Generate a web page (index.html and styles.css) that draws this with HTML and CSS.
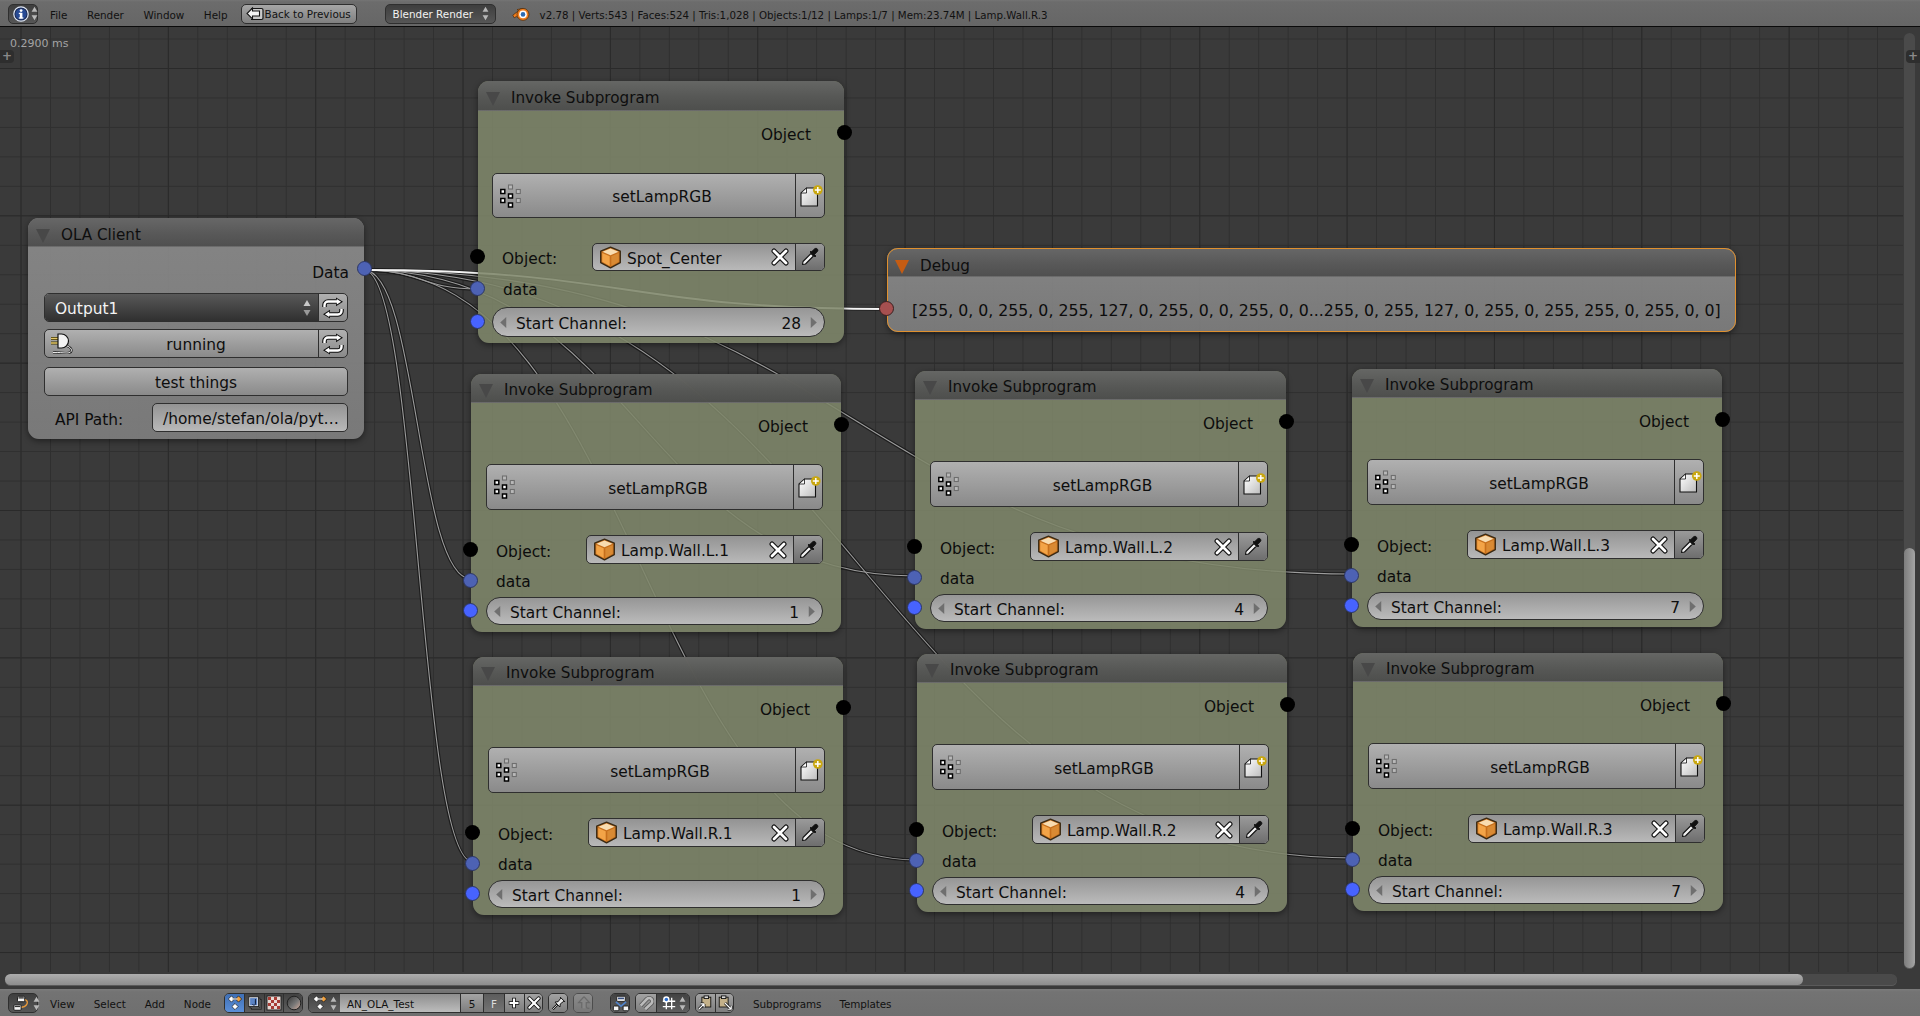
FILE: index.html
```html
<!DOCTYPE html>
<html lang="en">
<head>
<meta charset="utf-8">
<title>Blender Node Editor</title>
<link rel="stylesheet" href="styles.css">
</head>
<body>
<svg class="sprite" xmlns="http://www.w3.org/2000/svg">
  <defs>
    <linearGradient id="gPage" x1="0" y1="0" x2="1" y2="1"><stop offset="0" stop-color="#fff"/><stop offset="1" stop-color="#bdbdbd"/></linearGradient>
    <linearGradient id="gSphere" x1="0" y1="0" x2="1" y2="1"><stop offset="0" stop-color="#333"/><stop offset=".55" stop-color="#777"/><stop offset="1" stop-color="#d8b0a0"/></linearGradient>
    <symbol id="i-ud" viewBox="0 0 8 18"><path d="M4 1 7.500 7H.5zM4 17 .5 11h7z" fill="#b8b8b8"/></symbol>
    <symbol id="i-ud-dark" viewBox="0 0 8 18"><path d="M4 1 7.500 7H.5z" fill="#c8c8c8"/><path d="M4 17 .5 11h7z" fill="#9a9a9a"/></symbol>
    <symbol id="i-left" viewBox="0 0 6 10"><path d="M5.500 0v10L0 5z" fill="#6f6f6f"/></symbol>
    <symbol id="i-right" viewBox="0 0 6 10"><path d="M.5 0v10L6 5z" fill="#6f6f6f"/></symbol>
    <symbol id="i-info" viewBox="0 0 16 16"><circle cx="8" cy="8" r="7.200" fill="#1d2b52" stroke="#dfe7f5" stroke-width="1.200"/><circle cx="8" cy="8" r="5.600" fill="#274a94"/><rect x="6.800" y="6.800" width="2.600" height="5.600" fill="#fff"/><rect x="5.800" y="6.800" width="2" height="1.200" fill="#fff"/><rect x="5.800" y="11.400" width="4.600" height="1.200" fill="#fff"/><circle cx="8.100" cy="4.600" r="1.400" fill="#fff"/></symbol>
    <symbol id="i-back" viewBox="0 0 18 16"><path d="M5 2.500h10.500a1.500 1.500 0 0 1 1.500 1.500v8a1.500 1.500 0 0 1-1.500 1.500H5" fill="#c9c9c9" stroke="#151515" stroke-width="1.200"/><path d="M6.500 2 1 7.500 6.500 13V10h7V5h-7z" fill="#f5f5f5" stroke="#151515" stroke-width="1.100"/></symbol>
    <symbol id="i-blender" viewBox="0 0 18 16"><path d="M.8 9.200 6.500 4.800 5 3.600 11 2.400 9 13 4.300 10.600 2.200 11.800z" fill="#ee7d1e" stroke="#4b2a0a" stroke-width=".7" stroke-linejoin="round"/><circle cx="11" cy="8.400" r="6" fill="#ee7d1e" stroke="#4b2a0a" stroke-width=".7"/><circle cx="11" cy="8.400" r="3.800" fill="#fff"/><circle cx="11" cy="8.400" r="2.300" fill="#2c6bb3"/></symbol>
    <symbol id="i-nodeed" viewBox="0 0 20 18"><path d="M12 4.500c6 0 6 9-6 9" fill="none" stroke="#e99a3b" stroke-width="1.500"/><rect x="5" y="1" width="8" height="6" rx="1" fill="#f4f4f4" stroke="#111"/><rect x="1" y="10.500" width="8" height="6" rx="1" fill="#f4f4f4" stroke="#111"/><rect x="6" y="2" width="6" height="1.500" fill="#333"/><rect x="2" y="11.500" width="6" height="1.500" fill="#333"/></symbol>
    <symbol id="i-tree" viewBox="0 0 18 18"><path d="M5 1 8.500 4.500 5 8 1.500 4.500z" fill="#fff" stroke="#1b1b1b" stroke-width=".8"/><path d="M13 1 16.500 4.500 13 8 9.500 4.500z" fill="#f4a23d" stroke="#1b1b1b" stroke-width=".8"/><path d="M9 9.500 12.500 13 9 16.500 5.500 13z" fill="#fff" stroke="#1b1b1b" stroke-width=".8"/><path d="M6 4.500h6" stroke="#bbb" stroke-width="1.500"/></symbol>
    <symbol id="i-tex" viewBox="0 0 18 18"><rect x="5" y="5" width="11" height="11" fill="#777" stroke="#222"/><rect x="3.500" y="3.500" width="11" height="11" fill="#999" stroke="#222"/><rect x="2" y="2" width="11" height="11" fill="#dfe2e8" stroke="#222"/><rect x="3.500" y="3.500" width="8" height="8" fill="#5b83c4"/><path d="M9.500 4.500v5.200M6 10.500a1.500 1 0 1 0 3.500-1V6.500" fill="none" stroke="#16233f" stroke-width="1.100"/></symbol>
    <symbol id="i-check" viewBox="0 0 16 16"><rect x="1" y="1" width="14" height="14" fill="#e8d9d4" stroke="#222"/><path d="M2 2h3v3H2zM8 2h3v3H8zM5 5h3v3H5zM11 5h3v3h-3zM2 8h3v3H2zM8 8h3v3H8zM5 11h3v3H5zM11 11h3v3h-3z" fill="#a83c34"/></symbol>
    <symbol id="i-sphere" viewBox="0 0 16 16"><circle cx="8" cy="8" r="6.800" fill="url(#gSphere)" stroke="#222"/></symbol>
    <symbol id="i-plus" viewBox="0 0 16 16"><path d="M8 2v12M2 8h12" stroke="#111" stroke-width="4.200"/><path d="M8 2.800v10.400M2.800 8h10.400" stroke="#fff" stroke-width="2.400"/></symbol>
    <symbol id="i-x" viewBox="0 0 18 18"><path d="M3 3 15 15M15 3 3 15" stroke="#111" stroke-width="5" stroke-linecap="round"/><path d="M3 3 15 15M15 3 3 15" stroke="#fff" stroke-width="2.800" stroke-linecap="round"/></symbol>
    <symbol id="i-pin" viewBox="0 0 18 18"><path d="M2 16 7.500 10.500" stroke="#111" stroke-width="2.500"/><path d="M2 16 7.500 10.500" stroke="#ddd" stroke-width="1"/><path d="M4.500 8 8 7.500 11 3.500l-.5-1 5 5-1 -.5-4 3-.5 3.500z" fill="#e8e8e8" stroke="#111" stroke-width="1.100" stroke-linejoin="round"/></symbol>
    <symbol id="i-up" viewBox="0 0 18 18"><path d="M9 2 15 8.500H11.500V13a2 2 0 0 0 2 2H15M9 2 3 8.500H6.500V15" fill="none" stroke="#666" stroke-width="1.500"/><path d="M9 3.500 13 8H10.500v7h-3V8H5z" fill="#9a9a9a"/></symbol>
    <symbol id="i-usr" viewBox="0 0 20 20"><rect x="5" y="1.500" width="10" height="6" rx="1" fill="#f4f4f4" stroke="#111"/><rect x="6.500" y="3" width="7" height="2" fill="#39507f"/><path d="M4 8 10 13 16 8" fill="none" stroke="#4f82c9" stroke-width="2"/><rect x="1" y="13" width="6.500" height="5.500" rx="1" fill="#f4f4f4" stroke="#111"/><rect x="12.500" y="13" width="6.500" height="5.500" rx="1" fill="#f4f4f4" stroke="#111"/></symbol>
    <symbol id="i-mag" viewBox="0 0 18 18"><path d="M3 12 10 4.500a3.500 3.500 0 0 1 5 5L8 16" fill="none" stroke="#555" stroke-width="4.800"/><path d="M3 12 10 4.500a3.500 3.500 0 0 1 5 5L8 16" fill="none" stroke="#bbb" stroke-width="3"/></symbol>
    <symbol id="i-snap" viewBox="0 0 18 18"><path d="M6 3v13M12 3v13M2 7h14M2 13h14" stroke="#fff" stroke-width="1.500"/><circle cx="6" cy="5" r="3.600" fill="#fff"/><circle cx="6" cy="5" r="2" fill="#2d6fd0"/></symbol>
    <symbol id="i-copy" viewBox="0 0 18 18"><rect x="5.500" y="2.500" width="10" height="11" fill="#c4b189" stroke="#111"/><rect x="8" y="1" width="5" height="3" fill="#ddd" stroke="#111"/><path d="M2 16 8 10M8 10v4M8 10H4" fill="none" stroke="#111" stroke-width="3"/><path d="M2 16 8 10M8 10v4M8 10H4" fill="none" stroke="#fff" stroke-width="1.300"/></symbol>
    <symbol id="i-paste" viewBox="0 0 18 18"><rect x="2.500" y="2.500" width="10" height="11" fill="#c4b189" stroke="#111"/><rect x="5" y="1" width="5" height="3" fill="#ddd" stroke="#111"/><path d="M9 9 16 16M16 16v-4M16 16h-4" fill="none" stroke="#111" stroke-width="3"/><path d="M9 9 16 16M16 16v-4M16 16h-4" fill="none" stroke="#fff" stroke-width="1.300"/></symbol>
    <symbol id="i-cube" viewBox="0 0 20 20"><path d="M10 1 18.500 4.500V14.500L10 19 1.500 14.500V4.500z" fill="#c66f1c" stroke="#3a2a14" stroke-width="1.200" stroke-linejoin="round"/><path d="M10 2.200 17 5 10 8 3 5z" fill="#f8dcb0"/><path d="M2.800 6 9.300 8.900V17.300L2.800 13.800z" fill="#f3a447"/><path d="M10.700 8.900 17.200 6V13.800L10.700 17.300z" fill="#d98a33"/></symbol>
    <symbol id="i-drop" viewBox="0 0 20 20"><path d="M2.500 17.500 3 14.500 11 6.500 13.500 9 5.500 17z" fill="#f2f2f2" stroke="#111" stroke-width="1.100" stroke-linejoin="round"/><path d="M10 5 15 10 16 9 14.500 7.500 17.500 4.500a2 2 0 0 0-2.800-2.800L11.500 4.800 11 4z" fill="#111" stroke="#111" stroke-width=".8"/></symbol>
    <symbol id="i-sub" viewBox="0 0 24 24"><g fill="#b9b9b9" stroke="#6e6e6e" stroke-width="1.100"><rect x="9.500" y="1" width="4" height="4"/><rect x="17.300" y="5.500" width="4" height="4"/><rect x="17.300" y="14.500" width="4" height="4"/></g><g fill="#fff" stroke="#000" stroke-width="1.500"><rect x="1.800" y="5.500" width="4" height="4"/><rect x="9.500" y="10" width="4" height="4"/><rect x="1.800" y="14.500" width="4" height="4"/><rect x="9.500" y="19" width="4" height="4"/></g></symbol>
    <symbol id="i-new" viewBox="0 0 23 22"><path d="M6.500 3H17.500V21H1V8z" fill="url(#gPage)" stroke="#111" stroke-width="1.100"/><path d="M6.500 3V8H1z" fill="#fff" stroke="#111" stroke-width=".8"/><circle cx="17.800" cy="5" r="4.800" fill="#c9a70f"/><path d="M17.800 2v6M14.800 5h6" stroke="#fff" stroke-width="1.500"/></symbol>
    <symbol id="i-ref" viewBox="0 0 22 22"><g fill="none" stroke="#111" stroke-width="4.600"><path d="M2.500 10V8a3.500 3.500 0 0 1 3.500-3.500h9"/><path d="M19.500 12v2a3.500 3.500 0 0 1-3.500 3.500H7"/></g><path d="M14 .4 21 4.800 14 9.200zM8 12.800 1 17.200 8 21.600z" fill="#111"/><g fill="none" stroke="#fff" stroke-width="2.400"><path d="M2.500 10V8a3.500 3.500 0 0 1 3.500-3.500h9"/><path d="M19.500 12v2a3.500 3.500 0 0 1-3.500 3.500H7"/></g><path d="M14.800 2 19.100 4.800 14.800 7.600zM7.200 14.400 2.900 17.200 7.200 20z" fill="#fff"/></symbol>
    <symbol id="i-plug" viewBox="0 0 24 24"><path d="M1 6.500h7M1 11h7" stroke="#3a3000" stroke-width="3"/><path d="M1 6.500h7M1 11h7" stroke="#e4c86a" stroke-width="1.600"/><path d="M8 2h3.500a7 7 0 0 1 0 14H8z" fill="#f2f2f2" stroke="#111" stroke-width="1.200"/><path d="M17 14c6 2 6 7 0 7-4 0-8-.8-14-.5" fill="none" stroke="#111" stroke-width="2.200"/><path d="M17 14c6 2 6 7 0 7-4 0-8-.8-14-.5" fill="none" stroke="#eee" stroke-width="1"/></symbol>
  </defs>
</svg>

<div class="app">
  <header class="bar bar-top">
    <div class="hbtn hbtn-dark hbtn-editor"><svg class="ic16"><use href="#i-info"/></svg><svg class="ud"><use href="#i-ud"/></svg></div>
    <nav class="menus"><span>File</span><span>Render</span><span>Window</span><span>Help</span></nav>
    <div class="hbtn hbtn-back"><svg class="ic-back"><use href="#i-back"/></svg><span>Back to Previous</span></div>
    <div class="hbtn hbtn-dark hbtn-engine"><span>Blender Render</span><svg class="ud"><use href="#i-ud"/></svg></div>
    <svg class="ic-blender"><use href="#i-blender"/></svg>
    <span class="stats">v2.78 | Verts:543 | Faces:524 | Tris:1,028 | Objects:1/12 | Lamps:1/7 | Mem:23.74M | Lamp.Wall.R.3</span>
  </header>

  <main class="editor">
    <div class="canvas">
      <span class="timing">0.2900 ms</span>
      <span class="handle handle-l">+</span>

      <svg class="links" viewBox="0 0 1903 945" xmlns="http://www.w3.org/2000/svg">
        <defs>
          <path id="l1" d="M364 243C421 243 421 262 478 262"/>
          <path id="l2" d="M364 243C417.500 243 417.500 552 471 552"/>
          <path id="l3" d="M364 243C639.500 243 639.500 549 915 549"/>
          <path id="l4" d="M364 243C858 243 858 547 1352 547"/>
          <path id="l5" d="M364 243C418.500 243 418.500 835 473 835"/>
          <path id="l6" d="M364 243C640.500 243 640.500 833 917 833"/>
          <path id="l7" d="M364 243C858.500 243 858.500 831 1353 831"/>
          <path id="l8" d="M364 243C625.500 243 625.500 282 887 282"/>
        </defs>
        <g class="link-out">
          <use href="#l1"/><use href="#l2"/><use href="#l3"/><use href="#l4"/><use href="#l5"/><use href="#l6"/><use href="#l7"/><use href="#l8"/>
        </g>
        <g class="link-core">
          <use href="#l1"/><use href="#l2"/><use href="#l3"/><use href="#l4"/><use href="#l5"/><use href="#l6"/><use href="#l7"/>
        </g>
        <use class="link-sel" href="#l8"/>
      </svg>

      <!-- OLA Client -->
      <section class="node grey n-ola">
        <div class="node-head"><i class="tri"></i>OLA Client</div>
        <div class="ola-body">
          <div class="row row-out ola-out">Data<i class="sock sock-r sock-data"></i></div>
          <div class="w w-select ola-w"><span class="w-main w-dark"><span class="sel-text">Output1</span><svg class="ud"><use href="#i-ud-dark"/></svg></span><span class="w-side"><svg class="ic-ref"><use href="#i-ref"/></svg></span></div>
          <div class="w ola-w"><span class="w-main"><svg class="ic-plug"><use href="#i-plug"/></svg><span class="center">running</span></span><span class="w-side"><svg class="ic-ref"><use href="#i-ref"/></svg></span></div>
          <div class="w ola-w ola-test"><span class="w-main"><span class="center">test things</span></span></div>
          <div class="api-row"><span class="api-label">API Path:</span><span class="w w-field api-field">/home/stefan/ola/pyt…</span></div>
        </div>
      </section>

      <!-- Debug -->
      <section class="node grey sel n-debug">
        <div class="node-head"><i class="tri tri-on"></i>Debug</div>
        <div class="debug-body"><i class="sock sock-l sock-red"></i>[255, 0, 0, 255, 0, 255, 127, 0, 255, 0, 0, 255, 0, 0...255, 0, 255, 127, 0, 255, 0, 255, 255, 0, 255, 0, 0]</div>
      </section>

      <!-- Invoke Subprogram nodes -->
      <section class="node green big n-top">
        <div class="node-head"><i class="tri"></i>Invoke Subprogram</div>
        <div class="row row-out">Object<i class="sock sock-r"></i></div>
        <div class="row row-btn"><div class="w fill"><span class="w-main"><svg class="ic-sub"><use href="#i-sub"/></svg><span class="center">setLampRGB</span></span><span class="w-side"><svg class="ic-new"><use href="#i-new"/></svg></span></div></div>
        <div class="row row-obj"><i class="sock sock-l"></i><span class="lab">Object:</span><div class="w w-field w-obj"><svg class="ic-cube"><use href="#i-cube"/></svg><span class="obj-name">Spot_Center</span><svg class="ic-x"><use href="#i-x"/></svg><span class="w-side w-drop"><svg class="ic-drop"><use href="#i-drop"/></svg></span></div></div>
        <div class="row row-data"><i class="sock sock-l sock-data"></i><span class="lab">data</span></div>
        <div class="row row-start"><i class="sock sock-l sock-blue"></i><div class="w w-num"><svg class="arr"><use href="#i-left"/></svg><span class="num-lab">Start Channel:</span><span class="num-val">28</span><svg class="arr"><use href="#i-right"/></svg></div></div>
      </section>

      <section class="node green n-l1">
        <div class="node-head"><i class="tri"></i>Invoke Subprogram</div>
        <div class="row row-out">Object<i class="sock sock-r"></i></div>
        <div class="row row-btn"><div class="w fill"><span class="w-main"><svg class="ic-sub"><use href="#i-sub"/></svg><span class="center">setLampRGB</span></span><span class="w-side"><svg class="ic-new"><use href="#i-new"/></svg></span></div></div>
        <div class="row row-obj"><i class="sock sock-l"></i><span class="lab">Object:</span><div class="w w-field w-obj"><svg class="ic-cube"><use href="#i-cube"/></svg><span class="obj-name">Lamp.Wall.L.1</span><svg class="ic-x"><use href="#i-x"/></svg><span class="w-side w-drop"><svg class="ic-drop"><use href="#i-drop"/></svg></span></div></div>
        <div class="row row-data"><i class="sock sock-l sock-data"></i><span class="lab">data</span></div>
        <div class="row row-start"><i class="sock sock-l sock-blue"></i><div class="w w-num"><svg class="arr"><use href="#i-left"/></svg><span class="num-lab">Start Channel:</span><span class="num-val">1</span><svg class="arr"><use href="#i-right"/></svg></div></div>
      </section>

      <section class="node green n-l2">
        <div class="node-head"><i class="tri"></i>Invoke Subprogram</div>
        <div class="row row-out">Object<i class="sock sock-r"></i></div>
        <div class="row row-btn"><div class="w fill"><span class="w-main"><svg class="ic-sub"><use href="#i-sub"/></svg><span class="center">setLampRGB</span></span><span class="w-side"><svg class="ic-new"><use href="#i-new"/></svg></span></div></div>
        <div class="row row-obj"><i class="sock sock-l"></i><span class="lab">Object:</span><div class="w w-field w-obj"><svg class="ic-cube"><use href="#i-cube"/></svg><span class="obj-name">Lamp.Wall.L.2</span><svg class="ic-x"><use href="#i-x"/></svg><span class="w-side w-drop"><svg class="ic-drop"><use href="#i-drop"/></svg></span></div></div>
        <div class="row row-data"><i class="sock sock-l sock-data"></i><span class="lab">data</span></div>
        <div class="row row-start"><i class="sock sock-l sock-blue"></i><div class="w w-num"><svg class="arr"><use href="#i-left"/></svg><span class="num-lab">Start Channel:</span><span class="num-val">4</span><svg class="arr"><use href="#i-right"/></svg></div></div>
      </section>

      <section class="node green n-l3">
        <div class="node-head"><i class="tri"></i>Invoke Subprogram</div>
        <div class="row row-out">Object<i class="sock sock-r"></i></div>
        <div class="row row-btn"><div class="w fill"><span class="w-main"><svg class="ic-sub"><use href="#i-sub"/></svg><span class="center">setLampRGB</span></span><span class="w-side"><svg class="ic-new"><use href="#i-new"/></svg></span></div></div>
        <div class="row row-obj"><i class="sock sock-l"></i><span class="lab">Object:</span><div class="w w-field w-obj"><svg class="ic-cube"><use href="#i-cube"/></svg><span class="obj-name">Lamp.Wall.L.3</span><svg class="ic-x"><use href="#i-x"/></svg><span class="w-side w-drop"><svg class="ic-drop"><use href="#i-drop"/></svg></span></div></div>
        <div class="row row-data"><i class="sock sock-l sock-data"></i><span class="lab">data</span></div>
        <div class="row row-start"><i class="sock sock-l sock-blue"></i><div class="w w-num"><svg class="arr"><use href="#i-left"/></svg><span class="num-lab">Start Channel:</span><span class="num-val">7</span><svg class="arr"><use href="#i-right"/></svg></div></div>
      </section>

      <section class="node green n-r1">
        <div class="node-head"><i class="tri"></i>Invoke Subprogram</div>
        <div class="row row-out">Object<i class="sock sock-r"></i></div>
        <div class="row row-btn"><div class="w fill"><span class="w-main"><svg class="ic-sub"><use href="#i-sub"/></svg><span class="center">setLampRGB</span></span><span class="w-side"><svg class="ic-new"><use href="#i-new"/></svg></span></div></div>
        <div class="row row-obj"><i class="sock sock-l"></i><span class="lab">Object:</span><div class="w w-field w-obj"><svg class="ic-cube"><use href="#i-cube"/></svg><span class="obj-name">Lamp.Wall.R.1</span><svg class="ic-x"><use href="#i-x"/></svg><span class="w-side w-drop"><svg class="ic-drop"><use href="#i-drop"/></svg></span></div></div>
        <div class="row row-data"><i class="sock sock-l sock-data"></i><span class="lab">data</span></div>
        <div class="row row-start"><i class="sock sock-l sock-blue"></i><div class="w w-num"><svg class="arr"><use href="#i-left"/></svg><span class="num-lab">Start Channel:</span><span class="num-val">1</span><svg class="arr"><use href="#i-right"/></svg></div></div>
      </section>

      <section class="node green n-r2">
        <div class="node-head"><i class="tri"></i>Invoke Subprogram</div>
        <div class="row row-out">Object<i class="sock sock-r"></i></div>
        <div class="row row-btn"><div class="w fill"><span class="w-main"><svg class="ic-sub"><use href="#i-sub"/></svg><span class="center">setLampRGB</span></span><span class="w-side"><svg class="ic-new"><use href="#i-new"/></svg></span></div></div>
        <div class="row row-obj"><i class="sock sock-l"></i><span class="lab">Object:</span><div class="w w-field w-obj"><svg class="ic-cube"><use href="#i-cube"/></svg><span class="obj-name">Lamp.Wall.R.2</span><svg class="ic-x"><use href="#i-x"/></svg><span class="w-side w-drop"><svg class="ic-drop"><use href="#i-drop"/></svg></span></div></div>
        <div class="row row-data"><i class="sock sock-l sock-data"></i><span class="lab">data</span></div>
        <div class="row row-start"><i class="sock sock-l sock-blue"></i><div class="w w-num"><svg class="arr"><use href="#i-left"/></svg><span class="num-lab">Start Channel:</span><span class="num-val">4</span><svg class="arr"><use href="#i-right"/></svg></div></div>
      </section>

      <section class="node green n-r3">
        <div class="node-head"><i class="tri"></i>Invoke Subprogram</div>
        <div class="row row-out">Object<i class="sock sock-r"></i></div>
        <div class="row row-btn"><div class="w fill"><span class="w-main"><svg class="ic-sub"><use href="#i-sub"/></svg><span class="center">setLampRGB</span></span><span class="w-side"><svg class="ic-new"><use href="#i-new"/></svg></span></div></div>
        <div class="row row-obj"><i class="sock sock-l"></i><span class="lab">Object:</span><div class="w w-field w-obj"><svg class="ic-cube"><use href="#i-cube"/></svg><span class="obj-name">Lamp.Wall.R.3</span><svg class="ic-x"><use href="#i-x"/></svg><span class="w-side w-drop"><svg class="ic-drop"><use href="#i-drop"/></svg></span></div></div>
        <div class="row row-data"><i class="sock sock-l sock-data"></i><span class="lab">data</span></div>
        <div class="row row-start"><i class="sock sock-l sock-blue"></i><div class="w w-num"><svg class="arr"><use href="#i-left"/></svg><span class="num-lab">Start Channel:</span><span class="num-val">7</span><svg class="arr"><use href="#i-right"/></svg></div></div>
      </section>
    </div>

    <div class="vscroll"><div class="vtrack"><div class="vthumb"></div></div><span class="handle handle-r">+</span></div>
    <div class="hscroll"><div class="htrack"><div class="hthumb"></div></div></div>
    <div class="corner"></div>
  </main>

  <footer class="bar bar-bottom">
    <div class="hbtn hbtn-dark hbtn-editor"><svg class="ic18"><use href="#i-nodeed"/></svg><svg class="ud"><use href="#i-ud"/></svg></div>
    <nav class="menus"><span>View</span><span>Select</span><span>Add</span><span>Node</span></nav>
    <div class="grp grp-types">
      <span class="cell cell-on"><svg class="ic16"><use href="#i-tree"/></svg></span>
      <span class="cell"><svg class="ic16"><use href="#i-tex"/></svg></span>
      <span class="cell"><svg class="ic16"><use href="#i-check"/></svg></span>
      <span class="cell"><svg class="ic16"><use href="#i-sphere"/></svg></span>
    </div>
    <div class="grp grp-id">
      <span class="cell cell-idbtn"><svg class="ic16"><use href="#i-tree"/></svg><svg class="ud"><use href="#i-ud"/></svg></span>
      <span class="id-name">AN_OLA_Test</span>
      <span class="id-num">5</span>
      <span class="id-f">F</span>
      <span class="cell cell-light"><svg class="ic14"><use href="#i-plus"/></svg></span>
      <span class="cell cell-light"><svg class="ic14"><use href="#i-x"/></svg></span>
    </div>
    <div class="grp grp-one"><span class="cell cell-light"><svg class="ic16"><use href="#i-pin"/></svg></span></div>
    <div class="grp grp-one grp-off"><span class="cell cell-light"><svg class="ic16"><use href="#i-up"/></svg></span></div>
    <div class="grp grp-one grp-usr"><span class="cell cell-dark"><svg class="ic18"><use href="#i-usr"/></svg></span></div>
    <div class="grp grp-snap">
      <span class="cell cell-light"><svg class="ic16"><use href="#i-mag"/></svg></span>
      <span class="cell cell-dark cell-snap"><svg class="ic16"><use href="#i-snap"/></svg><svg class="ud"><use href="#i-ud"/></svg></span>
    </div>
    <div class="grp grp-copy">
      <span class="cell cell-light"><svg class="ic16"><use href="#i-copy"/></svg></span>
      <span class="cell cell-light"><svg class="ic16"><use href="#i-paste"/></svg></span>
    </div>
    <nav class="menus menus-right"><span>Subprograms</span><span>Templates</span></nav>
  </footer>
</div>
</body>
</html>
```

FILE: styles.css
```css
* { box-sizing: border-box; }
html, body { margin: 0; height: 100%; overflow: hidden; }
body { font-family: "DejaVu Sans", sans-serif; color: #0c0c0c; background: #3a3a3a; }
.sprite { position: absolute; width: 0; height: 0; }
svg { display: block; flex: none; }

.app { display: flex; flex-direction: column; height: 1016px; }

/* Bars */
.bar {
  display: flex; align-items: center; flex: none;
  font-size: 10.4px; color: #111; white-space: nowrap;
  padding-left: 8px;
}
.bar-top {
  height: 27px; padding-top: 1px;
  background: linear-gradient(#757575 0, #6c6c6c 2px, #666 100%);
  border-bottom: 1px solid #0a0a0a;
}
.bar-bottom {
  height: 27px; padding-top: 1px;
  background: linear-gradient(#7b7b7b 0, #737373 3px, #6f6f6f 100%);
}
.menus { display: flex; gap: 19.5px; margin-left: 12px; padding-top: 2px; }
.bar-bottom .menus { gap: 19px; }
.bar-bottom .menus-right { margin-left: 19px; gap: 18px; letter-spacing: -.1px; }

.hbtn {
  display: flex; align-items: center; height: 20px; flex: none;
  border: 1px solid #2f2f2f; border-radius: 5px;
}
.hbtn-dark { background: linear-gradient(#3e3e3e, #565656); color: #f2f2f2; }
.hbtn-editor { width: 30px; padding-left: 4px; gap: 2px; }
.hbtn-back {
  width: 116px; margin-left: 13px; padding-left: 4px; gap: 1px;
  background: linear-gradient(#a6a6a6, #808080);
}
.hbtn-engine { width: 111px; margin-left: 28px; padding: 0 6px 0 7px; justify-content: space-between; }
.ud { width: 7px; height: 15px; }
.ic16 { width: 16px; height: 16px; }
.ic18 { width: 18px; height: 17px; }
.ic14 { width: 14px; height: 14px; }
.ic-back { width: 18px; height: 16px; }
.ic-blender { width: 18px; height: 16px; margin-left: 16px; }
.stats { margin-left: 10px; padding-top: 2px; font-size: 10.25px; }

/* Editor */
.editor {
  flex: 1; min-height: 0;
  display: grid; grid-template-columns: 1fr 17px; grid-template-rows: 1fr 17px;
  background: #3a3a3a;
}
.canvas {
  position: relative; overflow: hidden;
  background-color: #3a3a3a;
  background-image:
    linear-gradient(90deg, #2a2a2a 1px, transparent 1px),
    linear-gradient(#2a2a2a 1px, transparent 1px),
    linear-gradient(90deg, #2f2f2f 1px, transparent 1px),
    linear-gradient(#2f2f2f 1px, transparent 1px);
  background-size: 147.35px 147.35px, 147.35px 147.35px, 29.47px 29.47px, 29.47px 29.47px;
  background-position: 20.5px 0, 0 41px, 20.5px 0, 0 11.5px;
}
.timing { position: absolute; left: 10px; top: 10px; font-size: 11px; color: #a4a4a4; }
.handle {
  position: absolute; width: 14px; height: 13px;
  background: #2e2e2e; color: #8a8a8a;
  font-size: 12px; font-weight: bold; line-height: 12px; text-align: center;
}
.handle-l { left: 0; top: 23px; border-radius: 0 4px 4px 0; }
.handle-r { right: 0; top: 23px; border-radius: 4px 0 0 4px; }

.links { position: absolute; left: 0; top: 0; width: 1903px; height: 945px; }
.link-out { stroke: #1c1c1c; stroke-width: 3.4; fill: none; }
.link-core { stroke: #9c9c9c; stroke-width: 1.1; fill: none; }
.link-sel { stroke: #f4f4f4; stroke-width: 1.8; fill: none; }

/* Scrollbars */
.vscroll { position: relative; padding: 6px 5px 4px 1px; display: flex; }
.vtrack { flex: 1; display: flex; flex-direction: column; justify-content: flex-end; background: #4a4a4a; border-radius: 6px; }
.vthumb { height: 420px; background: linear-gradient(90deg, #7d7d7d, #a4a4a4); border-radius: 6px; box-shadow: 0 1px 0 #5a5a5a; }
.hscroll { padding: 2px 6px 4px 5px; display: flex; }
.htrack { flex: 1; display: flex; background: #4a4a4a; border-radius: 6px; box-shadow: 0 1px 0 #5a5a5a; }
.hthumb { width: 1798px; background: linear-gradient(#adadad, #8d8d8d); border-radius: 6px; }
.corner { background: #3a3a3a; }

/* Nodes */
.node {
  position: absolute; display: flex; flex-direction: column;
  font-size: 15.4px; border-radius: 11px;
  box-shadow: 0 2px 6px rgba(0,0,0,.45);
}
.node-head {
  display: flex; align-items: center; flex: none; height: 29px;
  padding: 5px 0 0 8px; border-radius: 11px 11px 0 0;
  background: linear-gradient(rgba(100,100,100,.9), rgba(84,84,84,.9) 55%, rgba(74,74,74,.9));
  border-bottom: 1px solid rgba(110,110,110,.7);
  color: #0e0e0e; font-size: 15.2px;
  line-height: 1;
}
.big .node-head, .n-ola .node-head { padding-top: 7px; }
.n-debug .node-head { padding-top: 9px; }
.tri {
  width: 0; height: 0; margin-right: 11px; flex: none;
  border-left: 7px solid transparent; border-right: 7px solid transparent;
  border-top: 14px solid #484848;
}
.tri-on { border-top-color: #c55c13; }

.green { background: rgba(126,134,106,.88); width: 370px; height: 258px; }
.grey { background: linear-gradient(rgba(139,139,139,.92), rgba(126,126,126,.92)); }

.n-ola { left: 28px; top: 191px; width: 336px; height: 221px; }
.n-debug { left: 887px; top: 221px; width: 849px; height: 84px; }
.sel { outline: 1px solid #e0902e; outline-offset: -1px; }
.n-top { left: 478px; top: 54px; width: 366px; height: 262px; }
.n-l1 { left: 471px; top: 347px; }
.n-l2 { left: 915px; top: 344px; width: 371px; }
.n-l3 { left: 1352px; top: 342px; }
.n-r1 { left: 473px; top: 630px; }
.n-r2 { left: 917px; top: 627px; }
.n-r3 { left: 1353px; top: 626px; }

.row { position: relative; display: flex; align-items: center; flex: none; padding: 0 18px 0 15px; }
.row-out { margin-top: 10px; height: 24px; justify-content: flex-end; padding: 4px 33px 0 0; }
.row-btn { margin-top: 27px; height: 46px; align-items: stretch; }
.row-obj { margin-top: 25px; height: 29px; align-items: stretch; }
.row-data { height: 33px; }
.row-start { height: 28px; align-items: stretch; }
.big .node-head { height: 30px; }
.big .row-btn { margin-top: 28px; height: 45px; }
.big .row-obj { height: 28px; }
.big .row-data { height: 36px; }
.big .row-start { height: 30px; padding: 0 19px 0 14px; }
.big .row-btn, .big .row-obj { padding: 0 19px 0 14px; }
.lab { margin-left: 10px; width: 90px; flex: none; padding-top: 4px; align-self: center; }
.row-data .lab { padding-top: 2px; }

.sock {
  position: absolute; width: 15px; height: 15px; top: 50%;
  margin-top: -8px; border-radius: 50%; background: #000;
}
.sock-l { left: -8px; }
.sock-r { right: -8px; }
.sock-data { background: #4d62b4; border: 1px solid #2c3664; }
.sock-blue { background: #4763ff; border: 1px solid #2c3664; }
.sock-red { background: #a65050; border: 1px solid #3a2020; }

/* Widgets */
.w {
  display: flex; align-items: stretch; min-width: 0;
  border: 1px solid #2f2f2f; border-radius: 5px; overflow: hidden;
  background: linear-gradient(#b0b0b0, #8a8a8a);
  color: #0e0e0e;
}
.fill { flex: 1; }
.w-main { flex: 1; display: flex; align-items: center; min-width: 0; }
.w-side {
  width: 29px; flex: none; display: flex; align-items: center; justify-content: center;
  border-left: 1px solid #2f2f2f;
}
.center { flex: 1; text-align: center; padding-top: 3px; }
.ic-sub { width: 24px; height: 24px; margin: 0 6px 0 6px; }
.ic-new { width: 23px; height: 22px; margin-left: 2px; }

.w-field { background: linear-gradient(#939393, #b9b9b9); }
.w-obj { flex: 1; align-items: center; padding-left: 6px; }
.ic-cube { width: 23px; height: 23px; }
.obj-name { flex: 1; margin-left: 5px; padding-top: 3px; }
.ic-x { width: 18px; height: 18px; margin-right: 6px; }
.w-drop { align-self: stretch; background: linear-gradient(#9a9a9a, #6e6e6e); }
.ic-drop { width: 20px; height: 20px; }

.w-num {
  flex: 1; align-items: center; border-radius: 15px; padding: 0 7px;
  background: linear-gradient(#969696, #bbbbbb);
}
.arr { width: 7px; height: 11px; }
.num-lab { flex: 1; margin-left: 9px; padding-top: 3px; }
.num-val { margin-right: 9px; padding-top: 3px; }

/* OLA */
.ola-body { flex: 1; display: flex; flex-direction: column; padding: 0 16px; }
.ola-out { height: 24px; margin-top: 10px; padding: 7px 15px 0 0; margin-right: -16px; }
.ola-w { height: 29px; margin-top: 7px; flex: none; }
.ola-out + .w { margin-top: 12px; }
.ola-test { margin-top: 9px; }
.sel-text { padding-top: 3px; }
.w-dark { background: linear-gradient(#585858, #303030); color: #f4f4f4; padding: 0 7px 0 10px; justify-content: space-between; }
.w-dark .ud { width: 8px; height: 18px; }
.ic-ref { width: 22px; height: 22px; }
.ic-plug { width: 24px; height: 24px; margin-left: 5px; }
.api-row { display: flex; align-items: center; height: 29px; margin-top: 7px; flex: none; }
.api-label { margin-left: 11px; width: 97px; flex: none; padding-top: 4px; }
.api-field { flex: 1; height: 29px; align-items: center; padding: 3px 0 0 10px; white-space: nowrap; }

/* Debug */
.debug-body { flex: 1; position: relative; display: flex; align-items: center; padding: 11px 0 0 25px; white-space: nowrap; font-size: 15.75px; }
.debug-body .sock-l { left: -8px; top: 23.5px; margin-top: 0; }

/* Footer groups */
.grp {
  display: flex; align-items: stretch; height: 20px; flex: none;
  border: 1px solid #2f2f2f; border-radius: 5px; overflow: hidden;
}
.cell {
  display: flex; align-items: center; justify-content: center; gap: 2px;
  width: 20px; flex: none; background: linear-gradient(#424242, #5e5e5e);
  border-left: 1px solid #2f2f2f;
}
.cell:first-child { border-left: 0; }
.cell-on { background: linear-gradient(#3f6fb4, #5b8fd8); }
.cell-light { background: linear-gradient(#a2a2a2, #7e7e7e); }
.cell-dark { background: linear-gradient(#424242, #5e5e5e); }
.grp-types { margin-left: 13px; width: 79px; }
.grp-types .cell { width: 19.5px; }
.grp-id { margin-left: 5px; width: 235px; }
.cell-idbtn { width: 31px; }
.id-name {
  width: 120px; flex: none; padding-left: 7px; line-height: 20px;
  background: linear-gradient(#8e8e8e, #bcbcbc);
}
.id-num {
  width: 23px; flex: none; text-align: center; line-height: 20px;
  background: linear-gradient(#a4a4a4, #7e7e7e); border-left: 1px solid #2f2f2f;
}
.id-f {
  width: 21px; flex: none; text-align: center; line-height: 20px; color: #ddd;
  background: linear-gradient(#5c5c5c, #747474); border-left: 1px solid #2f2f2f;
}
.grp-one { margin-left: 5px; width: 20px; }
.grp-off { opacity: .55; }
.grp-usr { margin-left: 17px; }
.grp-snap { margin-left: 5px; width: 55px; }
.cell-snap { width: 35px; }
.grp-copy { margin-left: 5px; width: 39px; }
.grp-copy .cell { width: 19px; }
```
